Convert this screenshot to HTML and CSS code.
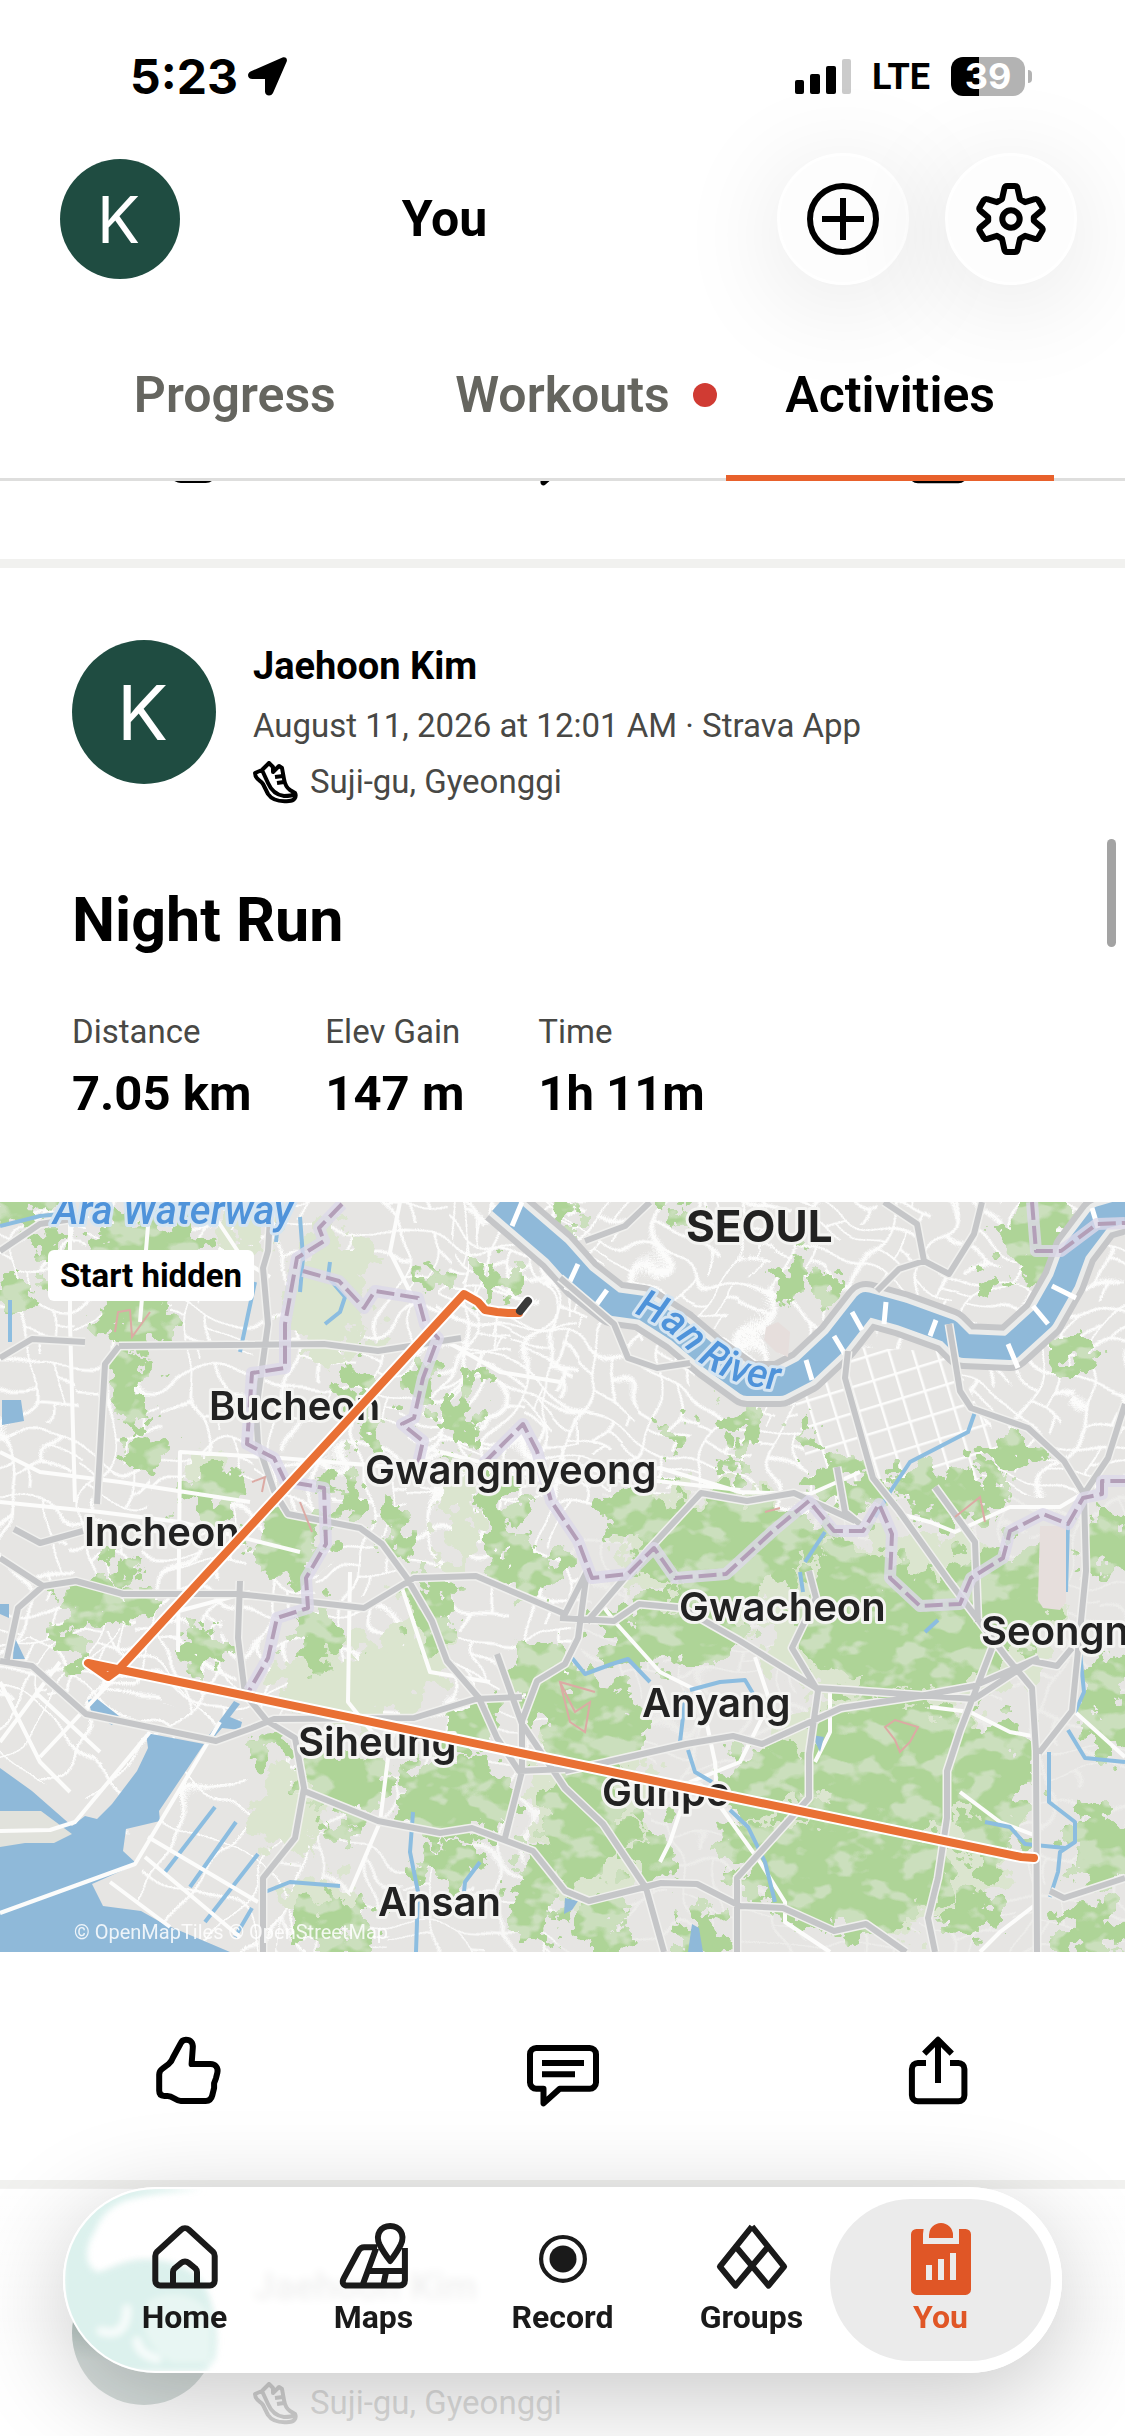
FILE: index.html
```html
<!DOCTYPE html>
<html lang="en">
<head>
    <meta charset="UTF-8">
    <meta name="viewport" content="width=device-width, initial-scale=1.0">
    <title>You - Activities</title>
    <link rel="stylesheet" href="styles.css">
</head>
<body>

    <!-- Shared icons -->
    <svg class="sprite" aria-hidden="true">
        <symbol id="icon-like" viewBox="0 0 24 24">
            <path d="M9.4 3.1C9.8 2 10.3 1.6 11.3 1.6c1.6 0 2.4 1 2.3 2.6L13.2 9.7h6.3c1.7 0 2.6 1.2 2.3 2.8l-.5 2-.6 1.6v1.6l-.6 2.4c-.3 1.3-.9 1.9-2.2 1.9H9.6c-1.7 0-2.6-1.7-4.4-1.7H4.1c-1.1 0-1.7-.6-1.7-1.7v-5.4c0-.9.4-1.5 1.1-2l2-1.5c.8-.6 1.2-1.3 1.5-2.2z"/>
        </symbol>
        <symbol id="icon-comment" viewBox="0 0 24 24">
            <path d="M3.2 4.3h17.6A2.1 2.1 0 0 1 23 6.4v9.4a2.1 2.1 0 0 1-2.2 2.1H10.9L5.5 22.8v-4.9H3.2A2.1 2.1 0 0 1 1 15.8V6.4a2.1 2.1 0 0 1 2.2-2.1zM5 9.3h14M5 13.1h11"/>
        </symbol>
        <symbol id="icon-share" viewBox="0 0 24 24">
            <path d="M8 9.3H5.3a2 2 0 0 0-2 2v8.800a2 2 0 0 0 2 2h13.500a2 2 0 0 0 2-2v-8.800a2 2 0 0 0-2-2H16M12 16V2M7.4 6.2 12 1.6l4.600 4.600"/>
        </symbol>
        <symbol id="icon-shoe" viewBox="0 0 45 43">
            <path d="M2 12 9 9l7-7 4 4v5l6-6 3 2 2 11c1 6 3 9 6 11l5 3c2 4-1 8-6 8-10 1-17-1-21-7l-5-10C8 19 2 19 2 12zM9 9l6 13c3 7 8 12 16 13 5 0 8 0 11-2M22 16l8-1M24 22l7-1"/>
        </symbol>
    </svg>

    <div class="app">
        <header class="top">
            <div class="status">
                <div class="status-left">
                    <span class="clock">5:23</span>
                    <svg class="location-arrow" viewBox="0 0 39 39" aria-hidden="true"><path d="M34.5.4C37.7-.6 39.6 1.6 38.7 4.6L25 36c-2 4-8 3-8-1.5V22H4.5C-.5 22-1.5 16.5 2.5 14.5z"/></svg>
                </div>
                <div class="status-right">
                    <svg class="signal" viewBox="0 0 56 36" aria-hidden="true">
                        <rect x="0" y="21" width="9" height="14" rx="2"/>
                        <rect x="15" y="15" width="10" height="20" rx="2"/>
                        <rect x="31" y="7" width="10" height="28" rx="2"/>
                        <rect class="weak" x="47" y="0" width="9" height="35" rx="2"/>
                    </svg>
                    <span class="network">LTE</span>
                    <span class="battery">39</span>
                </div>
            </div>

            <div class="title-bar">
                <span class="avatar avatar-small">K</span>
                <h1>You</h1>
                <button class="round-button" type="button" aria-label="Add">
                    <svg class="icon" viewBox="0 0 24 24"><path d="M12 5v14M5 12h14"/><circle cx="12" cy="12" r="11"/></svg>
                </button>
                <button class="round-button" type="button" aria-label="Settings">
                    <svg class="icon" viewBox="0 0 24 24">
                        <path d="M10.7 1h2.6c.5 0 .8.3.9.8l.8 3.6 1.7 1 3.2-1c.5-.2.9 0 1.2.4l1.3 2.2c.3.4.2.9-.2 1.2L19.6 11.4v1.2l2.6 2.2c.4.3.5.8.2 1.2l-1.3 2.2c-.3.4-.7.6-1.2.4l-3.2-1-1.7 1-.8 3.600c-.1.5-.4.8-.9.8h-2.6c-.5 0-.8-.3-.9-.8L9 18.600l-1.700-1-3.200 1c-.5.2-.9 0-1.200-.4L1.600 16c-.3-.4-.2-.9.200-1.200l2.600-2.200v-1.200L1.800 9.200C1.400 8.900 1.300 8.400 1.600 8l1.300-2.200c.3-.4.7-.6 1.200-.4l3.200 1L9 5.400l.8-3.600c.1-.5.4-.8.9-.8z"/>
                        <circle cx="12" cy="12" r="2.9"/>
                    </svg>
                </button>
            </div>

            <nav class="tabs">
                <a class="tab" href="#progress">Progress</a>
                <a class="tab has-dot" href="#workouts">Workouts</a>
                <a class="tab active" href="#activities">Activities</a>
            </nav>
        </header>

        <main>
            <!-- end of the previous activity, scrolled under the tabs -->
            <div class="previous">
                <div class="actions">
                    <button type="button" aria-label="Like"><svg class="icon"><use href="#icon-like"/></svg></button>
                    <button type="button" aria-label="Comment"><svg class="icon"><use href="#icon-comment"/></svg></button>
                    <button type="button" aria-label="Share"><svg class="icon"><use href="#icon-share"/></svg></button>
                </div>
            </div>

            <article class="activity">
                <div class="athlete">
                    <span class="avatar">K</span>
                    <div class="athlete-info">
                        <strong>Jaehoon Kim</strong>
                        <span>August 11, 2026 at 12:01 AM · Strava App</span>
                        <span class="place"><svg class="shoe"><use href="#icon-shoe"/></svg>Suji-gu, Gyeonggi</span>
                    </div>
                </div>
                <h2>Night Run</h2>
                <dl class="stats">
                    <div><dt>Distance</dt><dd>7.05 km</dd></div>
                    <div><dt>Elev Gain</dt><dd>147 m</dd></div>
                    <div><dt>Time</dt><dd>1h 11m</dd></div>
                </dl>

                <div class="map">
                    <svg viewBox="0 0 1125 750" preserveAspectRatio="xMidYMid slice" role="img" aria-label="Route map">
                        <defs>
                            <!-- ragged hill edges with darker patches inside -->
                            <filter id="hill" x="-5%" y="-5%" width="110%" height="110%">
                                <feTurbulence type="fractalNoise" baseFrequency="0.045" numOctaves="4" seed="7" result="noise"/>
                                <feDisplacementMap in="SourceGraphic" in2="noise" scale="70" xChannelSelector="R" yChannelSelector="G" result="land"/>
                                <feTurbulence type="fractalNoise" baseFrequency="0.03 0.045" numOctaves="3" seed="21"/>
                                <feColorMatrix values="0 0 0 0 0.6  0 0 0 0 0.74  0 0 0 0 0.51  9 0 0 0 -4.6" result="shade"/>
                                <feComposite in="shade" in2="land" operator="in" result="patches"/>
                                <feMerge>
                                    <feMergeNode in="land"/>
                                    <feMergeNode in="patches"/>
                                </feMerge>
                            </filter>
                            <filter id="rough" x="-5%" y="-5%" width="110%" height="110%">
                                <feTurbulence type="fractalNoise" baseFrequency="0.045" numOctaves="4" seed="7"/>
                                <feDisplacementMap in="SourceGraphic" scale="70" xChannelSelector="R" yChannelSelector="G"/>
                            </filter>
                            <filter id="bend" x="-5%" y="-5%" width="110%" height="110%">
                                <feTurbulence type="fractalNoise" baseFrequency="0.011" numOctaves="2" seed="12"/>
                                <feDisplacementMap in="SourceGraphic" scale="90" xChannelSelector="R" yChannelSelector="G"/>
                            </filter>
                            <pattern id="streets" width="88" height="76" patternUnits="userSpaceOnUse" patternTransform="rotate(4)">
                                <path class="street" d="M0 10H88M30 0V76M66 10V50M30 50H88M0 34H30M66 28H88M48 50V76"/>
                            </pattern>
                            <pattern id="dense" width="66" height="58" patternUnits="userSpaceOnUse" patternTransform="rotate(24)">
                                <path class="street" d="M0 8H66M20 0V58M44 8V40M20 40H66M0 26H20M44 24H66M58 40V58"/>
                            </pattern>
                            <pattern id="blocks" width="23" height="25" patternUnits="userSpaceOnUse" patternTransform="rotate(-17)">
                                <path class="street" d="M0 1H23M1 0V25"/>
                            </pattern>
                            <pattern id="port" width="44" height="54" patternUnits="userSpaceOnUse" patternTransform="rotate(38)">
                                <path class="street" d="M0 1H44M1 0V54"/>
                            </pattern>
                            <path id="han" d="M500 0 557 49 582 77 614 102 643 106 679 129 711 156 747 182 780 182 805 169 837 139 866 102 902 112 949 129 964 144 1010 146 1043 116 1064 79 1075 49 1100 16 1135 6"/>
                            <path id="han-label" d="M634 112Q668 124 690 151Q724 188 800 189"/>
                            <path id="highways" d="M0 156 32 137 85 140M119 144 324 142 378 149 461 136M119 144 105 162 97 302M270 0V16L268 49 263 66 268 122 256 209 258 242 274 289 288 312 360 326 382 342 407 376 432 419 447 459 479 496 497 536 519 569 565 567M0 49 40 22 79 16M14 327 40 341 83 329M0 356 43 384 76 379 123 392 238 392 364 406 414 376 476 374 565 412 587 369M43 384 18 406 7 457M0 459 32 464 86 512 216 539 252 526 274 517 414 516 476 497 522 495M240 379 238 436 245 492 267 519 295 536 304 586 295 636 263 676V750M304 589 378 619 440 631 472 626 533 649 565 689 589 699 661 681 697 682 740 704 783 706 834 729 866 722 906 750M505 636 522 569 522 519 537 479 565 462 578 436 587 369M497 452 522 522 565 586 603 622 646 686 664 750M848 149 845 176 873 276 899 309 949 379 1007 456 1032 486 1036 549 1037 750M949 122 960 189 971 206 1028 226 1064 259 1084 292 1086 369 1072 509 1039 551M1084 292 1108 256 1125 202M884 0 917 22 924 59 949 72 974 32 982 0M924 59 899 67 877 89M585 39 625 24 650 0M587 420 650 346 701 291 747 299 794 291 855 319M560 76 614 122 628 156 657 166 690 161M560 416 614 419 639 402 682 406 740 439 816 486 848 488 974 497 1032 459 1057 464 1072 446M809 369 816 396 792 446 818 489 809 552 809 596 737 676V750M565 569 603 561 686 542 733 534 762 542 841 506 920 494 974 484 1039 456M992 446 960 529 947 569 947 616 938 676 928 716 935 750M1050 689 1064 696 1125 676M935 285 975 340 978 420M837 265 845 310 860 322"/>
                            <path id="borders" d="M342 2 319 26 324 39 297 56 285 122V166L252 171 247 242 274 256 285 279 324 286 326 342 306 376 308 406 277 416 268 456 249 489M303 69 339 79 364 106 375 89 418 96 425 122 438 136 423 176 414 216 402 222 423 239 414 279M483 262 523 222 537 249 551 299 578 339 592 376 628 372 654 346 675 376 726 372 773 329 809 299 834 329 863 329 879 302 892 332 890 376 920 404 960 402 971 376 1003 356 1010 329 1043 312 1068 322 1083 296 1102 292V279H1125M1032 0 1036 49 1061 49 1097 22 1125 21"/>
                        </defs>

                        <rect width="1125" height="750" fill="#e6e5e3"/>

                        <g filter="url(#bend)">
                            <rect x="-60" y="-60" width="640" height="560" fill="url(#streets)"/>
                            <rect x="440" y="-60" width="760" height="360" fill="url(#dense)"/>
                            <rect x="560" y="300" width="640" height="520" fill="url(#streets)" opacity=".3"/>
                            <path d="M-40 420H250L150 620-40 560zM170 560H320V800H100z" fill="url(#port)"/>
                            <path d="M280 500H560V800H280z" fill="url(#streets)" opacity=".8"/>
                        </g>
                        <path d="M790 170 850 145 950 150 1000 250 960 300 810 280z" fill="#e6e5e3"/>
                        <path d="M790 170 850 145 950 150 1000 250 960 300 810 280z" fill="url(#blocks)"/>

                        <!-- parks and fields -->
                        <g fill="#dbe5cf" filter="url(#rough)">
                            <ellipse cx="330" cy="95" rx="42" ry="70"/>
                            <ellipse cx="350" cy="480" rx="75" ry="40"/>
                            <ellipse cx="290" cy="610" rx="38" ry="42"/>
                            <ellipse cx="240" cy="30" rx="30" ry="22"/>
                            <ellipse cx="420" cy="440" rx="30" ry="48"/>
                            <ellipse cx="205" cy="275" rx="20" ry="30"/>
                            <ellipse cx="460" cy="310" rx="16" ry="60"/>
                            <ellipse cx="320" cy="690" rx="34" ry="18"/>
                            <ellipse cx="720" cy="350" rx="100" ry="66"/>
                            <ellipse cx="910" cy="420" rx="150" ry="90"/>
                            <ellipse cx="880" cy="610" rx="140" ry="120"/>
                            <ellipse cx="590" cy="600" rx="60" ry="110"/>
                        </g>

                        <!-- hills -->
                        <g class="hills" filter="url(#hill)">
                            <ellipse cx="150" cy="40" rx="58" ry="22"/>
                            <ellipse cx="135" cy="110" rx="36" ry="38"/>
                            <ellipse cx="50" cy="38" rx="24" ry="9"/>
                            <ellipse cx="20" cy="5" rx="46" ry="14"/>
                            <ellipse cx="20" cy="90" rx="20" ry="16"/>
                            <ellipse cx="130" cy="190" rx="18" ry="38"/>
                            <ellipse cx="145" cy="250" rx="20" ry="20"/>
                            <ellipse cx="215" cy="290" rx="38" ry="26"/>
                            <ellipse cx="285" cy="340" rx="36" ry="34"/>
                            <ellipse cx="345" cy="290" rx="14" ry="36"/>
                            <ellipse cx="355" cy="180" rx="13" ry="18"/>
                            <ellipse cx="372" cy="235" rx="14" ry="22"/>
                            <ellipse cx="420" cy="190" rx="16" ry="24"/>
                            <ellipse cx="455" cy="215" rx="16" ry="26"/>
                            <ellipse cx="475" cy="185" rx="16" ry="12"/>
                            <ellipse cx="495" cy="85" rx="14" ry="20"/>
                            <ellipse cx="430" cy="75" rx="10" ry="12"/>
                            <ellipse cx="500" cy="310" rx="20" ry="40"/>
                            <ellipse cx="395" cy="330" rx="14" ry="26"/>
                            <ellipse cx="530" cy="365" rx="40" ry="26"/>
                            <ellipse cx="105" cy="400" rx="54" ry="18"/>
                            <ellipse cx="72" cy="440" rx="13" ry="36"/>
                            <ellipse cx="205" cy="445" rx="26" ry="24"/>
                            <ellipse cx="120" cy="366" rx="18" ry="14"/>
                            <ellipse cx="320" cy="440" rx="22" ry="32"/>
                            <ellipse cx="430" cy="410" rx="20" ry="42"/>
                            <ellipse cx="545" cy="480" rx="34" ry="46"/>
                            <ellipse cx="470" cy="525" rx="26" ry="26"/>
                            <ellipse cx="270" cy="545" rx="24" ry="14"/>
                            <ellipse cx="345" cy="580" rx="42" ry="34"/>
                            <ellipse cx="455" cy="595" rx="62" ry="42"/>
                            <ellipse cx="350" cy="625" rx="12" ry="12"/>
                            <ellipse cx="450" cy="660" rx="34" ry="20"/>
                            <ellipse cx="335" cy="720" rx="42" ry="30"/>
                            <ellipse cx="535" cy="690" rx="24" ry="50"/>
                            <ellipse cx="585" cy="620" rx="44" ry="62"/>
                            <ellipse cx="655" cy="650" rx="24" ry="28"/>
                            <ellipse cx="590" cy="525" rx="54" ry="48"/>
                            <ellipse cx="600" cy="725" rx="30" ry="30"/>
                            <ellipse cx="700" cy="735" rx="24" ry="24"/>
                            <ellipse cx="560" cy="20" rx="16" ry="26"/>
                            <ellipse cx="685" cy="14" rx="20" ry="18"/>
                            <ellipse cx="795" cy="70" rx="20" ry="26"/>
                            <ellipse cx="828" cy="90" rx="12" ry="20"/>
                            <ellipse cx="745" cy="220" rx="26" ry="18"/>
                            <ellipse cx="732" cy="260" rx="10" ry="18"/>
                            <ellipse cx="675" cy="230" rx="10" ry="12"/>
                            <ellipse cx="812" cy="240" rx="9" ry="18"/>
                            <ellipse cx="1040" cy="30" rx="36" ry="44"/>
                            <ellipse cx="985" cy="72" rx="14" ry="10"/>
                            <ellipse cx="1078" cy="155" rx="18" ry="16"/>
                            <ellipse cx="850" cy="282" rx="46" ry="20"/>
                            <ellipse cx="955" cy="290" rx="54" ry="26"/>
                            <ellipse cx="1010" cy="250" rx="34" ry="14"/>
                            <ellipse cx="720" cy="345" rx="84" ry="54"/>
                            <ellipse cx="630" cy="310" rx="30" ry="28"/>
                            <ellipse cx="800" cy="330" rx="40" ry="22"/>
                            <ellipse cx="670" cy="430" rx="72" ry="34"/>
                            <ellipse cx="850" cy="385" rx="46" ry="44"/>
                            <ellipse cx="910" cy="430" rx="116" ry="62"/>
                            <ellipse cx="1000" cy="385" rx="54" ry="44"/>
                            <ellipse cx="890" cy="560" rx="88" ry="66"/>
                            <ellipse cx="765" cy="580" rx="44" ry="36"/>
                            <ellipse cx="740" cy="640" rx="28" ry="24"/>
                            <ellipse cx="850" cy="670" rx="104" ry="62"/>
                            <ellipse cx="990" cy="570" rx="44" ry="56"/>
                            <ellipse cx="985" cy="640" rx="40" ry="26"/>
                            <ellipse cx="975" cy="710" rx="34" ry="20"/>
                            <ellipse cx="1105" cy="340" rx="26" ry="32"/>
                            <ellipse cx="1108" cy="500" rx="28" ry="50"/>
                            <ellipse cx="1100" cy="645" rx="34" ry="40"/>
                            <ellipse cx="1090" cy="725" rx="36" ry="28"/>
                        </g>

                        <path class="street-main" d="M0 250 40 270 120 280 250 300M150 0 140 120M205 0 245 60 270 75M400 0 390 50 430 130 500 170 560 180M175 410 250 390M178 450 180 250 280 256 430 268M70 0V120L75 300M0 300 100 310 180 320 300 350M440 250 560 280 660 266 740 290 810 292 860 270M560 258 620 275 740 288M350 370 348 500 380 540M390 540 380 620 350 690M400 380 430 470 490 480M600 400 615 420 660 470 700 490 715 560 717 600M755 455 770 500 740 560 690 580 670 640 660 660M717 600 760 660 785 700 785 720 830 750M1039 635 1000 620 960 590M1039 700 1000 730 980 750M1075 510 1125 555M930 505 970 510 1010 530 1032 534M900 312 930 320 955 330 1010 305 1060 305 1085 290M830 488 830 530 815 560"/>

                        <!-- sea and streams -->
                        <path class="water" d="M0 566 32 589 72 624 85 614 97 617 112 602 137 569 148 546 146 531 204 542 159 609 160 619 126 627 123 649 137 662 92 682 103 704 141 709 164 722 230 750H0zM204 540 234 499 240 502 230 515 242 520 240 528 222 526 210 540zM88 498 96 496 119 514 112 523 92 512zM14 434 25 457 13 457zM2 198H21L24 219 2 223zM565 696 578 699 572 708 564 712zM692 722 699 726 703 750H688zM812 533 824 535 820 550zM0 402H9V416L0 412z"/>
                        <path d="M0 609H41L72 632 54 641H25L0 645z" fill="#e1e2dc"/>
                        <path class="stream" d="M0 24 40 14 60 12M278 20 276 40M300 15 303 55 300 90M330 60 328 75 345 95 340 110 325 122M10 98V140M255 80 240 150M215 605 165 670M236 620 190 685M258 652 205 720M252 706 235 735M265 690 290 680 340 684M413 610 410 650 418 690 416 750M480 660 465 680 462 710M572 456 585 472 612 462 628 457 650 480M690 488 720 480 745 478 755 495M686 490 680 540M688 548 695 570 712 580M730 608 748 625 765 660 775 700M975 210 968 230 910 260 890 290 875 315M1068 320 1066 390M1080 450 1084 490 1075 510M1068 528 1085 556 1125 560M1049 550V600L1075 620V640L1060 650 1058 670 1050 695M985 620 1010 625 1025 642 1065 646M800 370 803 390M825 330 805 360M925 430 938 418"/>
                        <path class="street-main" d="M0 711 135 662 220 520M0 629 50 628 75 620 150 530M0 480 40 560 70 590M0 540 60 460M40 555 120 470M35 490 100 550M148 635 258 700M145 655 240 735M110 680 170 725"/>

                        <use href="#han" class="han-bank"/>
                        <use href="#han" class="han-shore"/>
                        <use href="#han" class="han-water"/>
                        <path class="bridge" d="M566 88 578 62M594 106 607 88M834 134 846 154M852 110 862 128M886 100 884 122M936 118 930 134M806 158 812 178M1008 142 1018 166M1033 104 1048 122M1052 84 1076 96M1092 6 1098 26M512 24 522 0"/>

                        <use href="#highways" class="highway-edge"/>
                        <use href="#highways" class="highway"/>
                        <path d="M1040 324H1066V400L1060 408 1043 406 1038 398zM766 125 778 120 790 130 788 155 776 150 764 138z" fill="#e6dedc"/>
                        <path class="military" d="M115 130 118 110 130 108 132 135 150 110M252 280 265 275 262 290M300 300 312 330M560 480 575 510 590 500 585 530 570 520 560 480 595 490M885 525 895 518 918 525 910 540 900 550 895 538zM765 310 780 306M955 315 980 295 985 320"/>

                        <use href="#borders" class="border-glow"/>
                        <use href="#borders" class="border"/>

                        <g class="city">
                            <text x="209" y="218">Bucheon</text>
                            <text x="365" y="282">Gwangmyeong</text>
                            <text x="84" y="344">Incheon</text>
                            <text x="679" y="419">Gwacheon</text>
                            <text x="981" y="443">Seongnam</text>
                            <text x="642" y="515">Anyang</text>
                            <text x="298" y="554">Siheung</text>
                            <text x="602" y="604">Gunpo</text>
                            <text x="378" y="714">Ansan</text>
                            <text class="capital" x="686" y="40">SEOUL</text>
                        </g>
                        <g class="water-name">
                            <text><textPath href="#han-label">Han River</textPath></text>
                            <text x="53" y="22">Ara Waterway</text>
                        </g>

                        <path class="route-edge" d="M528 99 519 111 497 110 485 108 478 100 464 92 119 467 108 475 88 461 1021 655 1034 656"/>
                        <path class="route" d="M519 111 508 111 497 110 485 108 478 100 464 92 119 467 108 475 88 461 1021 655 1034 656"/>
                        <path class="route hidden-part" d="M528 99 520 109"/>
                        <text class="credits" x="74" y="737">© OpenMapTiles © OpenStreetMap</text>
                    </svg>
                    <span class="map-note">Start hidden</span>
                </div>

                <div class="actions">
                    <button type="button" aria-label="Like"><svg class="icon"><use href="#icon-like"/></svg></button>
                    <button type="button" aria-label="Comment"><svg class="icon"><use href="#icon-comment"/></svg></button>
                    <button type="button" aria-label="Share"><svg class="icon"><use href="#icon-share"/></svg></button>
                </div>
            </article>

            <article class="activity next">
                <div class="athlete">
                    <span class="avatar"></span>
                    <div class="athlete-info">
                        <strong>Jaehoon Kim</strong>
                        <span class="place"><svg class="shoe"><use href="#icon-shoe"/></svg>Suji-gu, Gyeonggi</span>
                    </div>
                </div>
            </article>
        </main>
    </div>

    <div class="scroll-thumb"></div>
    <div class="fade"></div>

    <nav class="bottom-bar">
        <!-- avatar refracted through the glass edge -->
        <svg class="glass" viewBox="0 0 170 186" aria-hidden="true">
            <filter id="soft"><feGaussianBlur stdDeviation="3"/></filter>
            <g filter="url(#soft)">
                <path fill="#dcf1ed" d="M140 3C110 4 80 8 64 13C45 20 38 30 32 44C24 56 18 76 34 85C48 84 56 74 80 73C112 72 140 84 146 110C152 130 156 150 152 172L142 184H60L0 190V0H100z"/>
                <path fill="#e8f6f3" d="M84 115C108 100 138 108 148 130V176H110C90 166 72 140 84 115z"/>
                <path fill="none" stroke="#f7fcfb" stroke-width="9" stroke-linecap="round" d="M64 122C64 140 56 150 38 144M74 154C76 164 82 168 94 172"/>
            </g>
        </svg>
        <a class="bar-item" href="#home">
            <svg viewBox="0 0 24 26"><path d="M10.700 3.600a1.900 1.900 0 0 1 2.600 0l8 7.300c.4.400.6.800.6 1.400v8.300a1.600 1.600 0 0 1-1.600 1.600H3.700a1.600 1.600 0 0 1-1.600-1.600v-8.300c0-.6.2-1 .6-1.400zM8 22v-4.300c0-.5.2-.9.600-1.300l2.200-1.800a1.900 1.900 0 0 1 2.400 0l2.200 1.800c.4.400.6.800.6 1.300V22"/></svg>
            <span>Home</span>
        </a>
        <a class="bar-item" href="#maps">
            <svg viewBox="0 0 24 26"><path d="M13 9.400H8.700c-.9 0-1.400.4-1.800 1.100L1.900 19.800c-.8 1.500 0 2.400 1.200 2.400h17.400c1.200 0 1.800-.7 1.800-1.800V9.700M12.700 9.800 8.200 22M9.900 17.300h12.400M16.100 17.300 15.100 22M17.400 14c-1.300-1.700-2.800-4-3.500-5.400-1.700-3.600.5-6.300 3.500-6.300s5.200 2.700 3.500 6.300c-.7 1.400-2.200 3.700-3.500 5.400z"/></svg>
            <span>Maps</span>
        </a>
        <a class="bar-item" href="#record">
            <svg viewBox="0 0 24 26"><circle cx="12" cy="13.300" r="7.300" stroke-width="1.400"/><circle class="solid" cx="12" cy="13.300" r="4.500"/></svg>
            <span>Record</span>
        </a>
        <a class="bar-item" href="#groups">
            <svg viewBox="0 0 24 26"><path d="M12 2.500 22.700 15.900 17.500 22.200 6.500 9.100M12 2.500 1.300 15.900 6.500 22.200 17.500 9.100"/></svg>
            <span>Groups</span>
        </a>
        <a class="bar-item active" href="#you">
            <svg viewBox="0 0 24 26"><path class="solid" fill-rule="evenodd" d="M3.800 3.300H6.200L6 5v3.300h12V3.300h2.200A1.800 1.800 0 0 1 22 5.100v18.400a1.800 1.800 0 0 1-1.800 1.800H3.800A1.800 1.800 0 0 1 2 23.500V5.100a1.800 1.800 0 0 1 1.800-1.800zM7 15.300v5h2v-5zM11 13.300v7h2v-7zM15 11.300v9h2v-9zM8 6.300v-1a4 4 0 0 1 8 0v1z"/></svg>
            <span>You</span>
        </a>
    </nav>

</body>
</html>
```

FILE: styles.css
```css
/* Base */
* {
    box-sizing: border-box;
}

body {
    margin: 0;
    background-color: #fff;
    color: #000;
    font-family: Roboto, "Liberation Sans", sans-serif;
}

a {
    color: inherit;
    text-decoration: none;
}

button {
    padding: 0;
    border: none;
    background: none;
    color: inherit;
    cursor: pointer;
}

.sprite {
    position: absolute;
    width: 0;
    height: 0;
}

.icon {
    display: block;
    width: 72px;
    height: 72px;
    fill: none;
    stroke: currentColor;
    stroke-width: 2;
    stroke-linejoin: round;
}

.app {
    overflow: hidden;
}

/* Status bar */
.status {
    display: flex;
    justify-content: space-between;
    align-items: center;
    height: 153px;
    padding: 0 93px 0 130px;
    font-family: Inter, sans-serif;
    font-weight: 700;
}

.status-left,
.status-right {
    display: flex;
    align-items: center;
}

.status-left {
    gap: 10px;
}

.status-right {
    gap: 21px;
}

.clock {
    font-size: 48px;
}

.location-arrow {
    width: 39px;
    height: 39px;
}

.signal {
    width: 56px;
    height: 36px;
}

.signal .weak {
    fill: #cbcbcb;
}

.network {
    font-family: Roboto, sans-serif;
    font-size: 36px;
    line-height: 40px;
}

.battery {
    position: relative;
    width: 74px;
    margin-right: 7px;
    border-radius: 12px;
    background: linear-gradient(to right, #000 38%, #b3b3b3 38%);
    color: #fff;
    font-size: 36px;
    line-height: 39px;
    text-align: center;
}

.battery::after {
    content: "";
    position: absolute;
    top: 13px;
    right: -7px;
    width: 4px;
    height: 13px;
    border-radius: 0 6px 6px 0;
    background-color: #b3b3b3;
}

/* Title bar */
.title-bar {
    display: flex;
    align-items: center;
    gap: 36px;
    height: 132px;
    padding: 0 48px 0 60px;
}

.title-bar h1 {
    flex: 1;
    margin: 0;
    padding-right: 68px;
    font-size: 50px;
    line-height: 60px;
    text-align: center;
}

.avatar {
    display: flex;
    flex: none;
    align-items: center;
    justify-content: center;
    width: 144px;
    height: 144px;
    padding-right: 3px;
    border-radius: 50%;
    background-color: #1f4c41;
    color: #fff;
    font-family: Inter, sans-serif;
    font-size: 76px;
}

.avatar-small {
    width: 120px;
    height: 120px;
    font-size: 64px;
}

.round-button {
    display: flex;
    align-items: center;
    justify-content: center;
    width: 132px;
    height: 132px;
    border: 3px solid #fff;
    border-radius: 50%;
    background-color: #fdfdfd;
    box-shadow: 0 16px 110px rgba(0, 0, 0, 0.11);
}

/* Tabs */
.tabs {
    display: flex;
    height: 196px;
    padding: 0 71px;
    border-bottom: 3px solid #dededd;
}

.tab {
    position: relative;
    flex: 1;
    padding-top: 80px;
    color: #65655f;
    font-size: 50px;
    font-weight: 600;
    line-height: 60px;
    text-align: center;
}

.tab.active {
    margin-bottom: -3px;
    border-bottom: 6px solid #e8612c;
    color: #000;
}

.tab.has-dot::after {
    content: "";
    position: absolute;
    top: 98px;
    right: 9px;
    width: 24px;
    height: 24px;
    border-radius: 50%;
    background-color: #d03b33;
}

/* Activity cards */
.previous {
    display: flex;
    align-items: flex-end;
    height: 78px;
    overflow: hidden;
}

.activity {
    border-top: 9px solid #f1f1ef;
}

.athlete {
    display: flex;
    gap: 37px;
    padding: 72px 72px 0;
}

.athlete-info {
    display: flex;
    flex-direction: column;
    color: #484845;
    font-size: 33px;
    line-height: 56px;
}

.athlete-info strong {
    height: 58px;
    color: #000;
    font-size: 38px;
    line-height: 52px;
}

.place {
    display: flex;
    align-items: center;
    gap: 12px;
}

.shoe {
    width: 45px;
    height: 43px;
    fill: none;
    stroke: #000;
    stroke-width: 4;
    stroke-linejoin: round;
}

.activity h2 {
    margin: 74px 72px 0;
    font-size: 61px;
    line-height: 72px;
}

.stats {
    display: flex;
    gap: 74px;
    margin: 0;
    padding: 54px 72px 76px;
}

.stats dt {
    color: #484845;
    font-size: 33px;
    line-height: 44px;
}

.stats dd {
    margin: 8px 0 0;
    font-size: 49px;
    font-weight: 700;
    line-height: 64px;
}

.actions {
    display: flex;
    width: 100%;
    padding: 83px 0 73px;
}

.actions button {
    display: flex;
    flex: 1;
    justify-content: center;
}

.next .athlete-info {
    justify-content: space-between;
    height: 170px;
}

/* Map */
.map {
    position: relative;
}

.map svg {
    display: block;
    width: 100%;
}

.map-note {
    position: absolute;
    top: 48px;
    left: 48px;
    padding: 0 12px;
    border-radius: 6px;
    background-color: #fff;
    font-size: 33px;
    font-weight: 700;
    line-height: 51px;
}

.street,
.street-main {
    fill: none;
    stroke: #fcfcfb;
    stroke-width: 3;
}

.street-main {
    stroke-width: 4;
    stroke-linejoin: round;
}

.hills {
    fill: #aed497;
}

.water {
    fill: #8fb9d9;
}

.stream {
    fill: none;
    stroke: #8cbde0;
    stroke-width: 4;
    stroke-linejoin: round;
}

.han-bank,
.han-shore,
.han-water {
    fill: none;
    stroke: #c5c6c8;
    stroke-width: 46;
    stroke-linejoin: round;
}

.han-shore {
    stroke: #eaebea;
    stroke-width: 34;
}

.han-water {
    stroke: #8fb9d9;
    stroke-width: 24;
}

.bridge {
    fill: none;
    stroke: #fff;
    stroke-width: 5;
}

.highway-edge,
.highway {
    fill: none;
    stroke: #f0f0ee;
    stroke-width: 9;
    stroke-linejoin: round;
}

.highway {
    stroke: #c5c6c8;
    stroke-width: 6;
}

.military {
    fill: none;
    stroke: #dcaaa4;
    stroke-width: 2;
}

.border-glow,
.border {
    fill: none;
    stroke: #dcd8e8;
    stroke-width: 12;
    stroke-linejoin: round;
    opacity: 0.8;
}

.border {
    stroke: #b39fb8;
    stroke-width: 4;
    stroke-dasharray: 18 6;
    opacity: 1;
}

.city,
.water-name {
    fill: #222;
    stroke: #f4f4f2;
    stroke-width: 6;
    stroke-linejoin: round;
    paint-order: stroke;
    font-family: Inter, sans-serif;
    font-size: 40px;
    font-weight: 600;
}

.city .capital {
    font-size: 44px;
    font-weight: 700;
}

.water-name {
    fill: #4f93da;
    stroke: #d5e5f2;
    font-family: Roboto, sans-serif;
    font-size: 40px;
    font-style: italic;
    font-weight: 500;
}

.route,
.route-edge {
    fill: none;
    stroke: #e97034;
    stroke-width: 8;
    stroke-linecap: round;
    stroke-linejoin: round;
}

.route-edge {
    stroke: #fff;
    stroke-width: 12;
}

.hidden-part {
    stroke: #3a3a3a;
}

.credits {
    fill: #fff;
    font-size: 20px;
    opacity: 0.85;
}

/* Floating parts */
.scroll-thumb {
    position: fixed;
    top: 839px;
    right: 9px;
    width: 9px;
    height: 108px;
    border-radius: 5px;
    background-color: #a3a3a3;
}

.fade {
    position: fixed;
    right: 0;
    bottom: 0;
    left: 0;
    height: 248px;
    background: linear-gradient(rgba(255, 255, 255, 0.2), rgba(255, 255, 255, 0.82) 70%);
}

.bottom-bar {
    position: fixed;
    right: 63px;
    bottom: 63px;
    left: 63px;
    display: flex;
    height: 186px;
    padding: 0 25px;
    border: 2px solid #fff;
    border-radius: 93px;
    background-color: rgba(255, 255, 255, 0.88);
    backdrop-filter: blur(4px);
    box-shadow: 0 24px 100px rgba(0, 0, 0, 0.22);
    overflow: hidden;
}

.glass {
    position: absolute;
    top: -2px;
    left: -2px;
    width: 170px;
    height: 186px;
}

.bar-item {
    position: relative;
    display: flex;
    flex: 1;
    flex-direction: column;
    align-items: center;
    justify-content: center;
    padding-bottom: 4px;
    color: #1a1a1a;
    font-size: 32px;
    font-weight: 700;
    line-height: 40px;
}

.bar-item.active {
    color: #e05626;
}

.bar-item.active::before {
    content: "";
    position: absolute;
    top: 10px;
    right: -16px;
    bottom: 10px;
    left: -16px;
    border-radius: 81px;
    background-color: #ebebeb;
}

.bar-item svg {
    position: relative;
    width: 72px;
    height: 78px;
    fill: none;
    stroke: currentColor;
    stroke-width: 2;
    stroke-linejoin: round;
}

.bar-item span {
    position: relative;
}

.bar-item .solid {
    fill: currentColor;
    stroke: none;
}
```
